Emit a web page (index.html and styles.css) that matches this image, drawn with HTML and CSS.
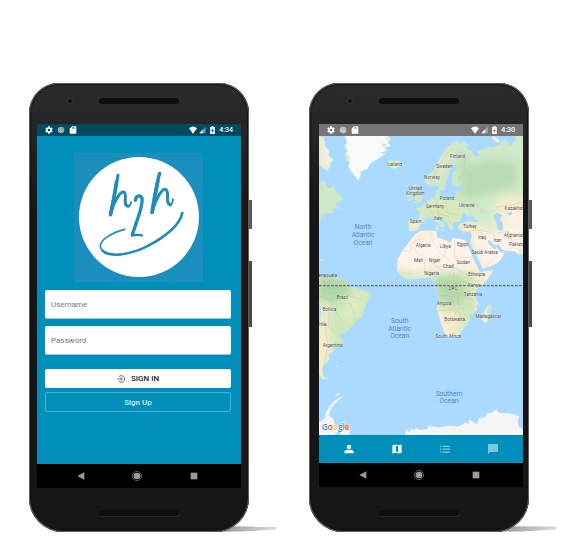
FILE: index.html
```html
<!DOCTYPE html>
<html lang="en">
<head>
<meta charset="utf-8">
<title>h2h</title>
<meta name="viewport" content="width=device-width, initial-scale=1">
<link rel="stylesheet" href="styles.css">
</head>
<body>
<svg class="sprite" aria-hidden="true">
  <symbol id="gear" viewBox="0 0 24 24"><path fill-rule="evenodd" d="M9.500 1h5l.7 3.400 2 1.100 3.300-1.100 2.500 4.200L20.500 11v2l2.500 2.400-2.500 4.200-3.300-1.100-2 1.100-.7 3.400h-5l-.7-3.400-2-1.100-3.300 1.100L1 15.400 3.500 13v-2L1 8.600l2.500-4.200 3.300 1.100 2-1.100zM12 8a4 4 0 1 0 0 8 4 4 0 0 0 0-8z"/></symbol>
  <symbol id="sync" viewBox="0 0 24 24"><circle cx="12" cy="12" r="10" opacity=".5"/><path d="M5 8l11 11M8 5l11 11M4 13l7 7" fill="none" stroke="currentColor" stroke-width="1.500" opacity=".6"/></symbol>
  <symbol id="card" viewBox="0 0 24 24"><path fill-rule="evenodd" d="M9 1h11q2 0 2 2v18q0 2-2 2H4q-2 0-2-2V8zM9 4v4h2V4zm4 0v4h2V4zm4 0v4h2V4z"/></symbol>
  <symbol id="wifi" viewBox="0 0 24 24"><path d="M12 23L0 7Q12-4 24 7z"/></symbol>
  <symbol id="signal" viewBox="0 0 24 24"><path opacity=".4" d="M1 23L23 1v22z"/><path d="M1 23L14 10v13z"/></symbol>
  <symbol id="battery" viewBox="0 0 14 24"><path fill-rule="evenodd" d="M4 0h6v3h4v21H0V3h4zM8 7l-5 8h3v6l5-8H8z"/></symbol>
  <symbol id="back" viewBox="0 0 24 24"><path d="M22 1v22L1 12z"/></symbol>
  <symbol id="home" viewBox="0 0 24 24"><circle cx="12" cy="12" r="11" fill="none" stroke="currentColor" stroke-width="2" opacity=".7"/><circle cx="12" cy="12" r="8"/></symbol>
  <symbol id="recent" viewBox="0 0 24 24"><path d="M2 2h20v20H2z"/></symbol>
</svg>

<main class="stage">
  <section class="phone" aria-label="Sign in screen">
    <div class="bezel-top"><span class="camera"></span><span class="speaker"></span></div>
    <div class="screen">
      <div class="status">
        <svg class="ico"><use href="#gear"/></svg>
        <svg class="ico"><use href="#sync"/></svg>
        <svg class="ico"><use href="#card"/></svg>
        <svg class="ico wifi"><use href="#wifi"/></svg>
        <svg class="ico signal"><use href="#signal"/></svg>
        <svg class="ico battery"><use href="#battery"/></svg>
        <time>4:34</time>
      </div>
      <form class="login">
        <svg class="logo" viewBox="39 25 387 387" role="img" aria-label="h2h logo">
          <rect x="39" y="25" width="387" height="387" fill="#1c8ebd"/>
          <circle cx="234" cy="217" r="180" fill="#fff"/>
          <g fill="none" stroke="#1f8dbc" stroke-linecap="round" stroke-linejoin="round">
            <path stroke-width="9" d="M171 92C165 130 156 170 148 211"/>
            <path stroke-width="11" d="M167 110C160 155 154 186 149 209"/>
            <path stroke-width="9" d="M151 198C160 174 176 140 188 142C202 148 182 182 202 185"/>
            <path stroke-width="5" d="M202 185Q209 183 210 172"/>
            <path stroke-width="10" d="M296 86C286 120 279 166 273 204"/>
            <path stroke-width="11" d="M291 108C284 140 278 174 274 202"/>
            <path stroke-width="9" d="M276 192C286 164 302 130 314 134C328 142 310 174 328 181"/>
            <path stroke-width="5" d="M328 181Q336 176 336 163"/>
            <path stroke-width="10" d="M223 167C224 154 238 148 243 161C247 187 224 235 214 271"/>
            <path stroke-width="7" d="M214 272Q230 269 243 272"/>
            <path stroke-width="5" d="M191 254C154 264 112 286 119 309C130 345 203 332 259 304"/>
            <path stroke-width="7" d="M125 318C150 340 215 328 262 303"/>
            <path stroke-width="8" d="M262 303C317 275 357 239 364 205"/>
          </g>
        </svg>
        <input class="field" type="text" placeholder="Username" aria-label="Username">
        <input class="field" type="password" placeholder="Password" aria-label="Password">
        <button class="btn btn-in" type="submit">
          <svg class="enter" viewBox="0 0 24 24" aria-hidden="true"><path d="M5 6A10 10 0 1 1 5 18M1 12h14M11 7l5 5-5 5" fill="none" stroke="currentColor" stroke-width="2"/></svg>
          SIGN IN
        </button>
        <button class="btn btn-up" type="button">Sign Up</button>
      </form>
      <div class="nav">
        <button aria-label="Back"><svg class="ico"><use href="#back"/></svg></button>
        <button aria-label="Home"><svg class="ico home"><use href="#home"/></svg></button>
        <button aria-label="Recent"><svg class="ico"><use href="#recent"/></svg></button>
      </div>
    </div>
    <div class="bezel-bottom"><span class="speaker"></span></div>
  </section>

  <section class="phone phone-map" aria-label="Map screen">
    <div class="bezel-top"><span class="camera"></span><span class="speaker"></span></div>
    <div class="screen">
      <div class="status">
        <svg class="ico"><use href="#gear"/></svg>
        <svg class="ico"><use href="#sync"/></svg>
        <svg class="ico"><use href="#card"/></svg>
        <svg class="ico wifi"><use href="#wifi"/></svg>
        <svg class="ico signal"><use href="#signal"/></svg>
        <svg class="ico battery"><use href="#battery"/></svg>
        <time>4:30</time>
      </div>
      <svg class="map" viewBox="0 0 612 897" role="img" aria-label="World map">
        <defs>
          <filter id="soft" x="-20%" y="-20%" width="140%" height="140%"><feGaussianBlur stdDeviation="12"/></filter>
          <path id="eurasia" d="M335 150L322 144 317 136 319 125 335 110 345 103 352 88 365 62 380 38 392 30 400 19 415 14 425 20 432 16 448 28 440 36 458 46 470 62 482 60 474 46 500 38 512 30 522 36 545 22 560 10 575 30 590 10 590 0 612 0V358L595 354 588 346 570 345 550 342 540 328 525 326 510 310 505 318 520 335 530 340 535 334 540 346 557 352 545 370 532 383 500 396 492 400 480 375 465 345 454 322 458 300 455 287 430 286 416 276 420 264 432 260 450 256 476 259 468 246 452 238 444 244 440 232 430 230 425 250 420 258 405 258 400 266 402 284 392 280 380 258 365 240 357 246 377 266 371 278 362 266 348 252 343 245 330 244 320 247 312 258 302 268 298 280 285 286 268 284 268 254 300 250 302 230 290 216 308 212 320 204 335 190 350 182 352 165 362 158 362 180 380 188 408 182 411 168 428 162 440 154 420 150 408 153 400 135 402 114 413 95 405 85 392 105 387 125 380 138 376 160 364 164 354 148z"/>
          <path id="africa" d="M303 285L290 293 278 308 265 325 250 345 236 370 236 390 232 402 245 418 262 430 290 428 318 425 335 424 348 440 350 452 360 475 354 517 366 562 380 597 390 603 418 597 438 572 453 552 453 537 473 522 476 497 464 480 473 460 503 432 524 402 483 409 468 379 453 344 443 319 436 311 420 308 402 306 395 320 372 310 355 305 352 286 330 283z"/>
          <path id="samerica" d="M0 422L20 420 45 428 80 433 92 450 115 457 140 465 156 473 154 486 142 500 135 525 128 545 108 555 100 570 80 590 64 592 66 606 74 614 64 628 46 632 42 648 28 656 32 670 20 682 10 700 14 720 27 729 10 730 0 715z"/>
          <path id="namerica" d="M0 0L15 4 18 30 32 45 28 60 44 70 34 82 34 90 24 106 0 86zM0 144L8 132 18 138 28 158 44 150 52 168 68 180 70 190 50 205 62 216 80 222 50 216 36 220 48 228 30 234 22 228 10 240 0 265z"/>
          <clipPath id="c1"><use href="#eurasia"/></clipPath>
          <clipPath id="c2"><use href="#africa"/></clipPath>
          <clipPath id="c3"><use href="#samerica"/></clipPath>
          <clipPath id="c4"><use href="#namerica"/></clipPath>
        </defs>
        <rect width="612" height="897" fill="#aadaff"/>
        <g clip-path="url(#c1)">
          <rect width="612" height="420" fill="#cfe9c8"/>
          <g filter="url(#soft)">
            <path fill="#b9dcb4" d="M430 100L500 70 600 80 590 150 520 170 450 190 420 180zM420 50l20 0 0 70-20 10z"/>
            <path fill="#d9e9ba" d="M290 200L420 190 430 260 340 250z"/>
            <path fill="#f6ebc9" d="M530 185L620 175V280H520zM420 262l80 0 30 60-110-20z"/>
            <path fill="#fff3e9" d="M450 290L510 290 620 270V330L560 400H480zM560 225h70v40h-70z"/>
            <path fill="#f6edcf" d="M265 245h40v45h-40z"/>
            <path fill="#eae6cc" d="M330 90l50-50 15 10-60 90z"/>
          </g>
        </g>
        <path fill="#aadaff" d="M522 238L535 230 550 238 544 250 552 264 550 284 536 282 534 266zM565 230l12-3 4 8-12 4z"/>
        <g clip-path="url(#c2)">
          <rect x="220" y="270" width="310" height="345" fill="#fff3ea"/>
          <g filter="url(#soft)">
            <path fill="#d0e5b6" d="M220 400L300 412 440 405 490 425 510 410 470 460 480 530 450 570 420 610 380 560 340 500 330 430 230 440z"/>
            <path fill="#b2d8aa" d="M340 422L425 420 440 490 400 512 350 480z"/>
            <path fill="#f6ebca" d="M450 390L530 395 500 440 470 440zM355 525L415 520 430 565 400 610 370 600z"/>
            <path fill="#f4edcf" d="M265 290l80-8 10 16-80 18z"/>
          </g>
        </g>
        <g clip-path="url(#c3)">
          <rect y="410" width="170" height="330" fill="#cde7bd"/>
          <g filter="url(#soft)">
            <path fill="#afd6a6" d="M0 420L75 430 100 470 40 500 0 490z"/>
            <path fill="#ddebc0" d="M90 470L150 470 110 550 60 560z"/>
            <path fill="#f7edca" d="M0 500L28 510 30 600 40 640 10 740-20 730z"/>
          </g>
          <path fill="#aadaff" d="M0 500l7 20-3 34-4 4z"/>
        </g>
        <g clip-path="url(#c4)">
          <rect width="90" height="270" fill="#cde8c5"/>
          <path filter="url(#soft)" fill="#f5efe1" d="M0 0h45v105H0z"/>
        </g>
        <path fill="#fafafa" d="M78 0L84 20 76 30 86 44 79 58 92 78 88 92 98 112 118 132 125 120 125 106 146 98 152 84 180 66 200 55 184 50 205 44 196 35 216 30 207 20 214 8 205 0z"/>
        <path fill="#d4eaca" d="M80 50l12 14-2 30 28 38-16-14-14-24 2-12-12-18zM190 22l12 4-2 8-12-3zM200 4l12 4-5 8z"/>
        <path fill="#d8edcc" d="M205 79L214 72 220 78 235 72 245 79 246 89 228 99 212 94z"/>
        <path fill="#cfe8c1" d="M286 143L298 147 292 158 303 173 311 185 307 197 282 202 290 194 285 187 293 179 283 168 279 156zM267 174L280 172 280 191 264 198z"/>
        <path fill="#f1eccb" d="M515 502L518 517 505 557 495 562 489 548 497 523z"/>
        <path fill="#d2e7bd" d="M515 502l3 15-13 40-2-30z"/>
        <path fill="#d5e9c8" d="M350 268l8-1 2 15-9 2zM0 368l15 5-8 3zM362 281l14-2-3 8zM425 290l15 1-10 3zM50 688l8-1-4 5zM148 707l6 1-4 3z"/>
        <path fill="#f3eed4" d="M524 0L542 12 536 22 518 7zM50 689l6-3 4 5z"/>
        <g fill="none" stroke="#aaa48f" stroke-width="1.500" opacity=".45">
          <path d="M335 145L350 105 375 62 398 38M440 48l-5 60-20 25M350 188l8 45 30 8M380 188l4 42 38 8M408 184l35 22 28-4 22 30M320 208l25 28M385 244l10 20M455 284l32-2 5 30M487 282l35 10 22 46M500 392l30-28M533 293l36-8 10 28-6 32M530 214l82-15"/>
          <path d="M250 345h25v-20l28-18M275 330l42 38v42M330 284l12 36 32 42M374 310l3 52 28 22v44M407 310v68M407 364h50M374 362l-40 30-4 32M346 390l60 4M405 384l-18 44M407 395l35 20 30-18M442 415l30 22 22-6M350 445l60-5 10 75M358 477l42 5 5 36 30-2M355 523h60l-20 38-25-5M416 520l15 38M430 475l35 20M410 440l35-3 20 25M318 368l55 36"/>
          <path d="M8 430l24 30 40-12M0 480l35 12 20 45 20 22M32 510l-4 60 20 20M14 530l12 100-16 80M75 458l20 25 35 8M92 500l16 35"/>
        </g>
        <path fill="#f5f5f5" d="M258 894L262 880 272 888 276 878 282 882 294 877 300 882 325 879 328 870 360 874 390 869 420 871 438 860 450 863 450 850 474 864 480 846 500 843 504 832 518 830 530 820 542 832 570 832 600 840 596 858 600 872 612 880V897H258z"/>
        <path fill="#f5f5f5" d="M0 858L18 846 20 832 30 812 46 795 60 786 72 784 60 792 46 804 36 820 30 838 44 850 48 870 62 882 46 897H0zM48 775l10-3 4 4-12 3zM72 870l15-4 8 12-5 19H65z"/>
        <path d="M0 449H612" stroke="#5b4d55" stroke-width="3" stroke-dasharray="8 4"/>
        <g class="country">
          <text x="227" y="90">Iceland</text><text x="416" y="65">Finland</text><text x="376" y="97">Sweden</text><text x="339" y="129">Norway</text>
          <text x="289" y="163">United</text><text x="289" y="177">Kingdom</text><text x="384" y="192">Poland</text><text x="348" y="215">Germany</text>
          <text x="443" y="213">Ukraine</text><text x="357" y="253">Italy</text><text x="290" y="262">Spain</text><text x="453" y="277">Turkey</text>
          <text x="593" y="223">Kazakhstan</text><text x="489" y="309">Iraq</text><text x="535" y="317">Iran</text><text x="592" y="302">Afghanistan</text><text x="597" y="329">Pakistan</text>
          <text x="312" y="332">Algeria</text><text x="379" y="337">Libya</text><text x="431" y="331">Egypt</text><text x="497" y="353">Saudi Arabia</text>
          <text x="298" y="379">Mali</text><text x="347" y="379">Niger</text><text x="388" y="396">Chad</text><text x="433" y="384">Sudan</text>
          <text x="338" y="417">Nigeria</text><text x="473" y="420">Ethiopia</text><text x="402" y="462">DRC</text><text x="466" y="453">Kenya</text>
          <text x="462" y="481">Tanzania</text><text x="375" y="508">Angola</text><text x="407" y="555">Botswana</text><text x="508" y="545">Madagascar</text><text x="388" y="605">South Africa</text>
          <text x="22" y="423">Venezuela</text><text x="70" y="490">Brazil</text><text x="31" y="525">Bolivia</text><text x="7" y="571">Chile</text><text x="41" y="633">Argentina</text>
        </g>
        <g class="ocean">
          <text x="132" y="280">North</text><text x="132" y="303">Atlantic</text><text x="132" y="326">Ocean</text>
          <text x="242" y="561">South</text><text x="242" y="584">Atlantic</text><text x="242" y="607">Ocean</text>
          <text x="390" y="779">Southern</text><text x="390" y="802">Ocean</text>
        </g>
        <text class="google" x="8" y="883"><tspan fill="#4285f4">G</tspan><tspan fill="#ea4335">o</tspan><tspan fill="#fbbc05">o</tspan><tspan fill="#4285f4">g</tspan><tspan fill="#34a853">l</tspan><tspan fill="#ea4335">e</tspan></text>
      </svg>
      <nav class="tabs">
        <button aria-label="Profile"><svg viewBox="0 0 24 24"><circle cx="12" cy="7" r="5.500"/><path d="M1 22v-3q0-5 11-5t11 5v3z"/></svg></button>
        <button aria-label="Map"><svg viewBox="0 0 24 24"><path fill-rule="evenodd" d="M1 3l7-2 8 2 7-2v20l-7 2-8-2-7 2zM9 4v14l6 2V6z"/></svg></button>
        <button class="dim" aria-label="List"><svg viewBox="0 0 24 24"><path d="M0 4h3v3H0zM6 4h18v3H6zM0 11h3v3H0zM6 11h18v3H6zM0 18h3v3H0zM6 18h18v3H6z"/></svg></button>
        <button class="dim" aria-label="Messages"><svg viewBox="0 0 24 24"><path d="M2 0h20q2 0 2 2v15q0 2-2 2H5l-5 5V2q0-2 2-2z"/></svg></button>
      </nav>
      <div class="nav">
        <button aria-label="Back"><svg class="ico"><use href="#back"/></svg></button>
        <button aria-label="Home"><svg class="ico home"><use href="#home"/></svg></button>
        <button aria-label="Recent"><svg class="ico"><use href="#recent"/></svg></button>
      </div>
    </div>
    <div class="bezel-bottom"><span class="speaker"></span></div>
  </section>
</main>
</body>
</html>
```
FILE: styles.css
```css
* { box-sizing: border-box; }

body {
  margin: 0;
  background: #fff;
  font-family: Roboto, "Liberation Sans", sans-serif;
}

button {
  border: 0;
  padding: 0;
  background: none;
  color: inherit;
  font: inherit;
}

.sprite {
  position: absolute;
  width: 0;
  height: 0;
}

.stage {
  display: flex;
  gap: 60px;
  padding: 83px 29px 20px;
}

/* Device frame */
.phone {
  position: relative;
  flex: 0 1 220px;
  display: flex;
  flex-direction: column;
  padding: 0 8px;
  border-radius: 30px 30px 34px 34px;
  background: linear-gradient(#2b2b2d 0, #262628 40px, #161617 130px, #161617 100%);
  box-shadow: inset 0 0 1px 1px #6a6a6a, inset 0 0 1px 2px #0c0c0c;
}

.phone-map { padding: 0 6px 0 10px; }

/* Ground shadow, and the side keys */
.phone::before {
  content: "";
  position: absolute;
  z-index: -1;
  right: -28px;
  bottom: 0;
  width: 70px;
  height: 6px;
  background: linear-gradient(90deg, #888, #ddd);
  clip-path: polygon(0 0, 100% 10%, 98% 60%, 50% 90%, 0 100%);
}

.phone::after {
  content: "";
  position: absolute;
  top: 117px;
  right: -3px;
  width: 3px;
  height: 127px;
  background: linear-gradient(#5c5759 29px, transparent 29px, transparent 61px, #4b4849 61px);
}

.bezel-top {
  display: grid;
  grid-template-columns: 1fr 80px 1fr;
  align-items: center;
  height: 41px;
  padding-bottom: 5px;
}

.phone-map .bezel-top,
.phone-map .bezel-bottom {
  margin-right: 2px;
  margin-left: -2px;
}

.camera {
  justify-self: end;
  width: 6px;
  height: 6px;
  margin-right: 26px;
  border: 1px solid #3b373d;
  border-radius: 50%;
  background: #111018;
}

.speaker {
  width: 80px;
  height: 6px;
  border-radius: 3px;
  background: #0e0e0e;
}

.bezel-bottom {
  display: flex;
  justify-content: center;
  margin-top: auto;
  padding: 22px 0 16px;
}

.bezel-bottom .speaker { box-shadow: 1px 1px 0 #252526; }

.screen { background: #000; }

.ico {
  width: 8px;
  height: 8px;
  fill: currentColor;
}

.status {
  display: flex;
  align-items: center;
  gap: 4px;
  height: 12px;
  padding: 0 8px;
  background: #004b5f;
  color: #fff;
  font-size: 7px;
  font-weight: 500;
}

.phone-map .status { background: #757575; }
.status .wifi { margin-left: auto; }
.status .signal { width: 7px; margin-left: -2px; }
.status .battery { width: 5px; }

/* Sign in */
.login {
  display: flex;
  flex-direction: column;
  min-height: 328px;
  padding: 17px 10px 16px 8px;
  background: #008fbb;
}

.logo {
  align-self: center;
  width: 129px;
  margin-bottom: 8px;
}

.field {
  width: 100%;
  height: 29px;
  margin-bottom: 7px;
  padding: 0 6px;
  border: 0;
  border-bottom: 1px solid #9cc8d8;
  border-radius: 2px;
  background: #fff;
  color: #333;
  font: 8px Roboto, sans-serif;
}

.field::placeholder { color: #777; opacity: 1; }

.btn {
  display: flex;
  align-items: center;
  justify-content: center;
  gap: 6px;
  height: 19px;
  border-radius: 2px;
  font-size: 8px;
  font-weight: 500;
}

.btn-in {
  margin: 7px 0 4px;
  background: #fff;
  color: #222;
}

.btn-up {
  height: 20px;
  border: 1px solid #4fb0cf;
  color: #d9eff7;
}

.enter { width: 8px; height: 8px; }

/* Map */
.map {
  display: block;
  width: 100%;
}

.map text { font-family: Roboto, sans-serif; }

.country {
  font-size: 14px;
  fill: #4c4c4c;
  text-anchor: middle;
  stroke: #fff;
  stroke-width: 2px;
  stroke-opacity: .5;
  paint-order: stroke;
}

.ocean {
  font-size: 20px;
  fill: #4f86cf;
  text-anchor: middle;
}

.map .google {
  font-family: "Open Sans", sans-serif;
  font-size: 25px;
  font-weight: 600;
  stroke: #fff;
  stroke-width: 3px;
  paint-order: stroke;
}

.tabs {
  display: grid;
  grid-template-columns: repeat(4, 1fr);
  height: 28px;
  padding: 0 6px;
  background: #008fbb;
  color: #fff;
}

.tabs button,
.nav button {
  display: grid;
  place-items: center;
}

.tabs svg {
  width: 10px;
  height: 10px;
  fill: currentColor;
}

.tabs .dim { opacity: .5; }

.nav {
  display: grid;
  grid-template-columns: repeat(3, 1fr);
  height: 24px;
  padding: 0 19px 0 16px;
  color: #9b9b9b;
}

.nav .home { width: 10px; height: 10px; }
```
